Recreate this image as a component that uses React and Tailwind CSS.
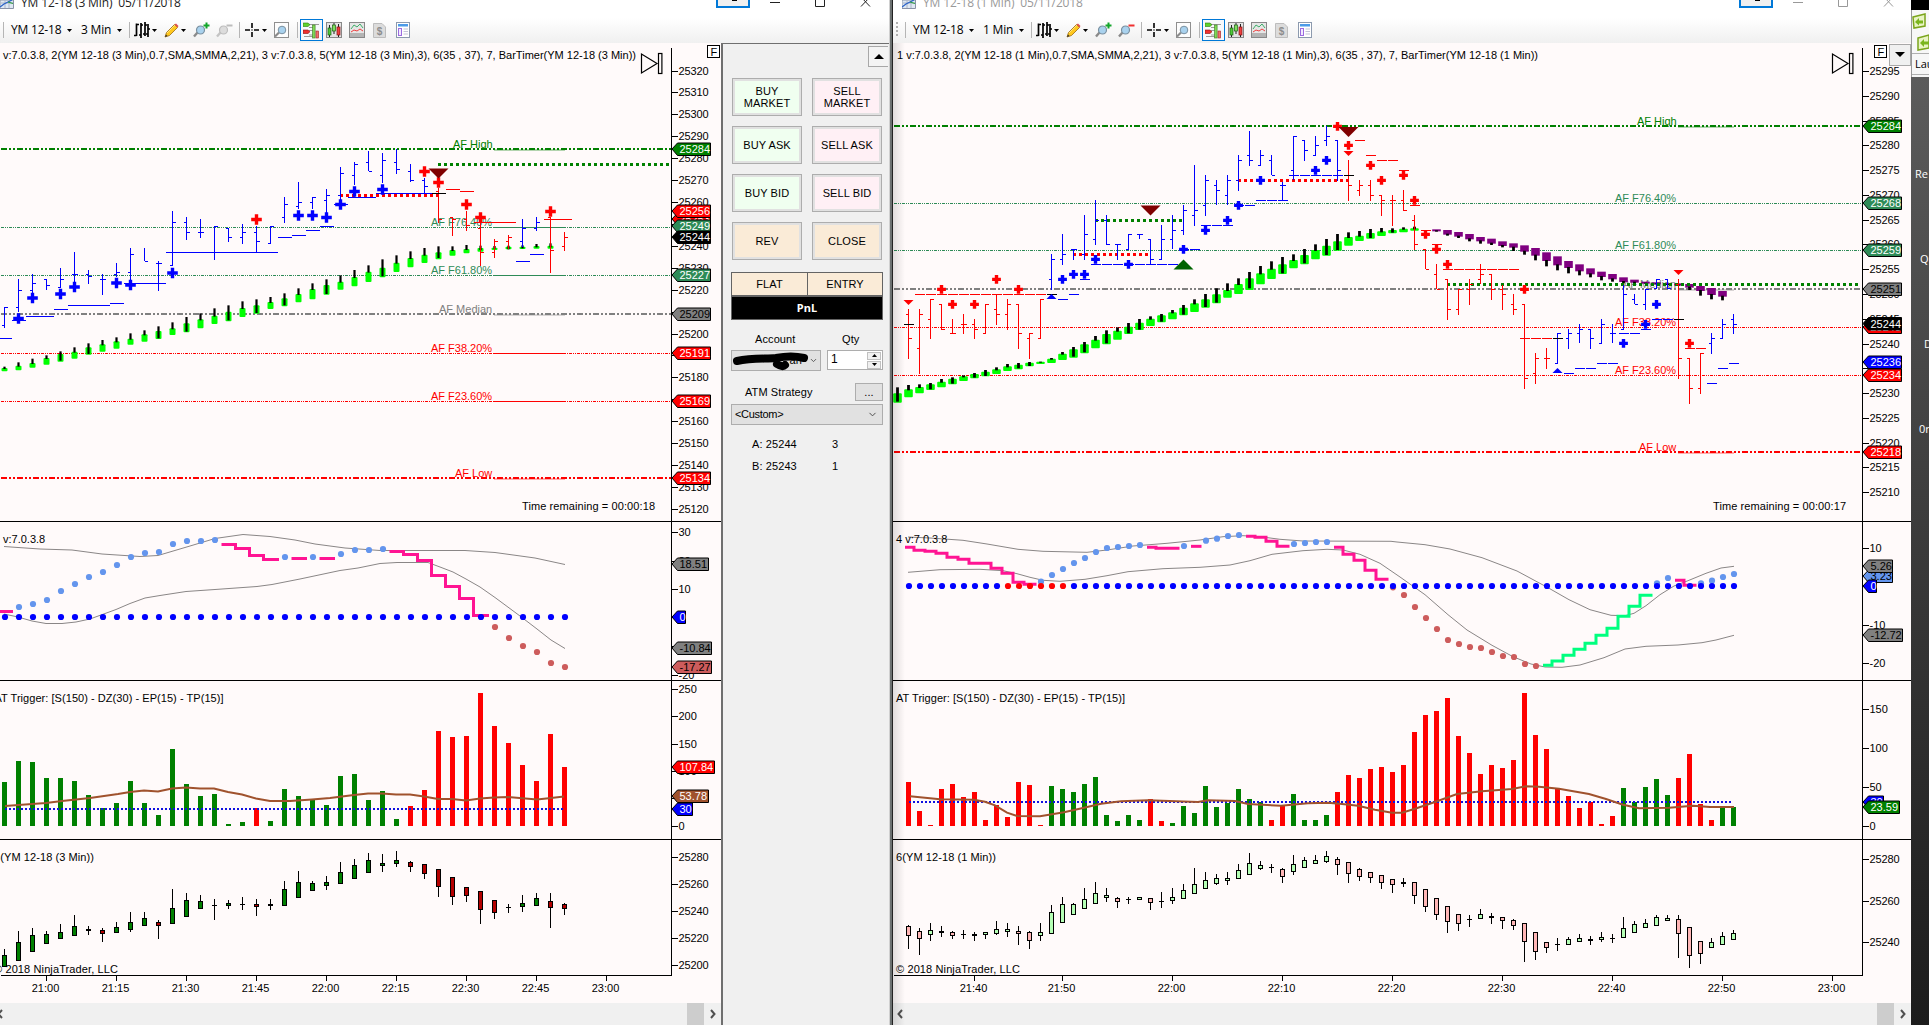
import { ChevronDown } from 'lucide-react';

const FONT = "font-['Liberation_Sans',Arial,sans-serif]";
const UI_FONT = "font-['Open_Sans','Noto_Sans',sans-serif]";

const BLUE = '#0000ff';
const RED = '#ff0000';
const GREEN = '#008000';
const SEA = '#2e8b57';
const GRAY = '#808080';
const PINK = '#ff1493';
const SKY = '#6495ed';
const ROSE = '#cd5c5c';
const BROWN = '#a0522d';

// rows are kept in thirds of a pixel below a base line, first entry is the bar index
const down = (base, rows) => rows.map((r) => r.map((v, k) => (k === 0 || typeof v === 'string' ? v : base + v / 3)));

/* ---------- 3 minute chart data ---------- */

const L = {
  x: (i) => 4.5 + 14 * i,
  step: 14,
  left: 0,
  width: 721,
  axis: 671.5,
  lastX: 565,
};

// index, high, low, open, close, colour
const lBars = [
  [0, 307, 328, 325, 307], [1, 279, 312, 307, 290], [2, 274, 293, 290, 283], [3, 279, 290, 279, 285],
  [4, 268, 288, 287, 279], [5, 252, 285, 274, 274], [6, 270, 284, 274, 276], [7, 274, 295, 279, 279],
  [8, 263, 277, 274, 272], [9, 248, 280, 272, 254], [10, 248, 261, null, 261], [11, 261, 291, 263, 263],
  [12, 211, 266, 265, 222], [13, 217, 240, 222, 232], [14, 219, 238, 232, 232], [15, 226, 260, null, 226],
  [16, 228, 242, 228, 237], [17, 224, 244, 237, 232], [18, 226, 252, 232, 241], [19, 226, 244, 243, 226],
  [20, 197, 223, 217, 204], [21, 182, 209, 206, 202], [22, 197, 209, 202, 197], [23, 189, 213, 200, 195],
  [24, 167, 200, 195, 173], [25, 162, 185, 175, 164], [26, 151, 171, 162, 171], [27, 153, 183, 175, 160],
  [28, 149, 174, 162, 169], [29, 164, 182, 171, 180], [30, 178, 193, 180, 186],
  [31, 188, 223, 191, 219, RED], [32, 217, 236, 217, 219, RED], [33, 211, 231, 219, 225, RED],
  [34, 222, 266, 228, 252, RED], [35, 239, 258, 252, 241, RED], [36, 235, 249, 241, 237, RED],
  [37, 219, 247, 241, 228], [38, 217, 231, 228, 222], [39, 217, 273, 217, 250, RED], [40, 232, 251, 246, 237, RED],
];

const lPluses = [
  [18, 318.5], [32, 298], [60, 294], [74, 287], [116, 283], [130, 285], [172, 273], [298, 215.5], [312, 215.5],
  [326, 217.5], [340, 204.5], [354, 191.5], [382, 189.5],
  [256, 219.5, RED], [424, 171.5, RED], [438, 182.5, RED], [466, 204.5, RED], [480, 217.5, RED], [550, 211.5, RED],
];

const lStops = [
  [0, 12, 338], [12, 26, 320], [26, 54, 316], [54, 68, 309], [68, 110, 305], [110, 124, 303], [124, 166, 283],
  [166, 278, 252], [278, 292, 237], [292, 306, 235], [306, 320, 230], [320, 334, 226], [334, 348, 204],
  [348, 376, 197], [376, 432, 193], [432, 446, 193, '#000'], [446, 460, 189, RED], [460, 474, 191, RED],
  [474, 516, 222, RED], [516, 530, 261], [530, 544, 254], [544, 572, 219, RED],
];

// index, wick top, body top, body bottom, wick bottom
const lTrend = [
  ...down(280, [
    [0, 260, 264, 274], [1, 247, 257, 271], [2, 236, 249, 263], [3, 226, 234, 254], [4, 214, 222, 245, 242],
    [5, 202, 215, 236], [6, 190, 202, 224, 222], [7, 180, 193, 215], [8, 172, 184, 206], [9, 160, 176, 194],
    [10, 151, 163, 185], [11, 139, 153, 177, 175], [12, 127, 145, 165], [13, 111, 130, 157, 155], [14, 100, 118, 145],
    [15, 85, 107, 132], [16, 76, 95, 124, 121], [17, 64, 84, 111], [18, 58, 76, 101, 99], [19, 51, 66, 87],
    [20, 40, 55, 79, 76], [21, 25, 42, 67], [22, 10, 27, 58],
  ]),
  ...down(0, [
    [23, 838, 855, 884, 882], [24, 826, 845, 869], [25, 810, 831, 859], [26, 796, 815, 846], [27, 778, 803, 832, 829],
    [28, 766, 788, 816], [29, 754, 774, 802], [30, 744, 764, 789], [31, 739, 757, 778, 774], [32, 739, 750, 767],
    [33, 735, 747, 760], [34, 737, 744, 755, 750], [35, 738, 743, 750], [36, 737, 740, 748, 748], [37, 736, 740, 747, 745],
    [38, 732, 738, 746, 742], [39, 730, 737, 746, 742],
  ]),
];

const lOsc = [
  [1, 607], [2, 604], [3, 600], [4, 591], [5, 584], [6, 577], [7, 572], [8, 565], [9, 557], [10, 553], [11, 552],
  [12, 544], [13, 541], [14, 541], [15, 540], [20, 557], [22, 557], [24, 554], [25, 550], [26, 550], [27, 549],
  [35, 627, ROSE], [36, 638, ROSE], [37, 646, ROSE], [38, 652, ROSE], [39, 663, ROSE], [40, 667, ROSE],
];

const lSteps = [
  [0, [611.5]],
  [16, [544.5, 548.5, 555.5, 559.5]],
  [21, [558.5]],
  [23, [558.5]],
  [28, [551.5, 554.5, 560.5, 575.5, 586.5, 598.5, 615.5]],
];

const lUpper = '4,546.5 18,547.5 40,549 72,550 102,554 140,556.5 158,555.5 190,546 215,538.5 243,534.5 270,536.5 295,540 315,544 345,548 380,550.5 465,550.5 495,552.5 535,558 565,564.5';
const lLower = '4,614 18,617 32,621 46,623.5 62,623.5 76,622 90,619 116,609.5 130,603.5 145,598 160,595.5 186,591.5 215,589.5 257,586.5 272,584.5 300,579 340,570.5 358,568 380,563.5 397,562.5 428,562.5 440,567 453,572 466,579 480,587 495,597.5 520,616 537,629 551,640 565,648.5';

const lVolume = [
  782, 761, 762, 778, 778, 781, 795, 808, 803, 781, 803, 815, 749, 784, 796, 794, 824, 822, 808, 821, 789, 796, 799,
  805, 776, 774, 800, 791, 819, 806, 790, 731, 737, 736, 693, 726, 743, 765, 781, 734, 767,
];
const lVolRed = (i) => i === 18 || i >= 29;
const lBrown = '5,806 32,804 46,803 62,801 90,798 104,796 118,794 130,792 144,790.5 158,791.5 172,788.5 186,787.5 200,788.5 214,788.5 228,792 242,794.5 256,798.5 270,801 290,801 312,799.5 330,798 354,795 368,793.5 382,793.5 396,794.5 410,794.5 424,796.5 438,799 452,799 466,800.5 480,798.5 494,797.5 508,797 537,799.5 551,798 564,796.5';

// index, high, body top, body bottom, low, kind
const lCandles = down(830, [
  [0, 357, 376, 412, 412, 'g'], [1, 303, 337, 394, 394, 'g'], [2, 294, 316, 367, 367, 'g'], [3, 303, 313, 341, 341, 'g'],
  [4, 282, 307, 328, 328, 'g'], [5, 255, 289, 317, 317, 'g'], [6, 289, 297, 304, 314, 'g'], [7, 294, 301, 311, 335, 'r'],
  [8, 276, 292, 308, 308, 'g'], [9, 246, 277, 299, 305, 'g'], [10, 246, 265, 287, 287, 'g'], [11, 270, 277, 287, 326, 'r'],
  [12, 177, 235, 283, 283, 'g'], [13, 189, 211, 260, 260, 'g'], [14, 195, 214, 236, 236, 'g'], [15, 207, 225, 228, 269, 'k'],
  [16, 210, 220, 227, 237, 'g'], [17, 201, 222, 225, 240, 'k'], [18, 207, 223, 230, 258, 'r'], [19, 207, 222, 227, 240, 'k'],
  [20, 153, 178, 227, 227, 'g'], [21, 123, 157, 203, 203, 'g'], [22, 153, 160, 182, 182, 'g'], [23, 138, 157, 169, 180, 'g'],
  [24, 96, 127, 163, 163, 'g'], [25, 87, 106, 146, 146, 'g'], [26, 69, 91, 128, 128, 'g'], [27, 72, 100, 109, 126, 'g'],
  [28, 63, 91, 103, 110, 'g'], [29, 93, 97, 112, 125, 'r'], [30, 102, 103, 131, 147, 'r'], [31, 118, 118, 170, 201, 'r'],
  [32, 142, 142, 200, 224, 'r'], [33, 172, 172, 197, 216, 'r'], [34, 183, 184, 239, 282, 'r'], [35, 210, 211, 248, 267, 'r'],
  [36, 222, 230, 233, 249, 'k'], [37, 195, 220, 232, 246, 'g'], [38, 189, 205, 228, 228, 'g'], [39, 189, 214, 233, 293, 'r'],
  [40, 219, 223, 236, 255, 'r'],
]);

/* ---------- 1 minute chart data ---------- */

const R = {
  x: (i) => 908.5 + 11 * i,
  step: 11,
  left: 893,
  width: 1018,
  axis: 1862.5,
  lastX: 1734,
};

const rBars = down(0, [
  [0, 927, 1077, 943, 1016, RED], [1, 927, 1122, 1045, 943, RED], [2, 898, 1017, 958, 898, RED], [3, 912, 990, 912, 988, RED],
  [4, 957, 1000, 1000, 1000, RED], [5, 942, 1001, 973, 973, RED], [6, 957, 1017, 973, 988, RED], [7, 912, 1000, 1000, 912, RED],
  [8, 884, 974, 928, 943, RED], [9, 898, 990, 943, 913, RED], [10, 912, 1047, 912, 1000, RED], [11, 1000, 1077, 1016, 1000, RED],
  [12, 898, 1016, 1016, 898, RED], [13, 763, 869, 838, 778], [14, 702, 795, 778, 763], [15, 748, 780, 748, 748],
  [16, 645, 779, 763, 703], [17, 600, 734, 717, 661], [18, 645, 734, 661, 733], [19, 733, 780, 733, 733],
  [20, 703, 748, 748, 703], [21, 703, 718, 703, 703], [22, 718, 793, 718, 778], [23, 675, 778, 778, 718],
  [24, 645, 748, 718, 691], [25, 615, 704, 691, 631], [26, 495, 678, 646, 631], [27, 525, 648, 617, 541],
  [28, 540, 616, 556, 571], [29, 525, 616, 586, 541], [30, 465, 573, 541, 481], [31, 393, 497, 466, 481],
  [32, 450, 497, 496, 466], [33, 465, 526, 481, 526], [34, 545, 601, 556, 556], [35, 408, 540, 511, 408],
  [36, 420, 482, 420, 451], [37, 408, 467, 466, 436], [38, 379, 437, 421, 408], [39, 420, 542, 420, 511],
  [40, 480, 602, 541, 556, RED], [41, 540, 587, 571, 556, RED], [42, 540, 602, 556, 586, RED], [43, 585, 648, 586, 601, RED],
  [44, 585, 678, 601, 601, RED], [45, 570, 632, 601, 631, RED], [46, 645, 750, 660, 734, RED], [47, 748, 808, 748, 808, RED],
  [48, 792, 868, 823, 868, RED], [49, 838, 960, 838, 928, RED], [50, 868, 945, 928, 868, RED], [51, 838, 915, 868, 853, RED],
  [52, 792, 853, 838, 823, RED], [53, 822, 900, 823, 868, RED], [54, 855, 930, 868, 883, RED], [55, 882, 945, 913, 928, RED],
  [56, 912, 1167, 913, 1135, RED], [57, 1058, 1152, 1120, 1075, RED], [58, 1044, 1107, 1075, 1075, RED],
  [59, 1000, 1091, 1091, 1000], [60, 987, 1047, 1016, 1000], [61, 972, 1030, 1000, 987], [62, 988, 1047, 988, 1016],
  [63, 957, 1030, 1030, 972], [64, 972, 1030, 1000, 1000], [65, 855, 988, 988, 883], [66, 883, 913, 898, 913],
  [67, 868, 930, 913, 868], [68, 838, 868, 866, 838], [69, 838, 868, 838, 866], [70, 838, 1137, 853, 1075, RED],
  [71, 1075, 1212, 1075, 1165, RED], [72, 1060, 1182, 1165, 1060, RED], [73, 1000, 1062, 1030, 1016],
  [74, 957, 1016, 1016, 972], [75, 942, 1002, 957, 972],
]);

const rPluses = down(0, [
  [3, 868, RED], [4, 913, RED], [6, 913, RED], [8, 838, RED], [10, 868, RED], [39, 379, RED], [40, 436, RED],
  [42, 496, RED], [43, 541, RED], [45, 526, RED], [46, 601, RED], [47, 703, RED], [48, 748, RED], [49, 793, RED],
  [56, 868, RED], [71, 1030, RED],
  [14, 838], [15, 823], [16, 823], [17, 778], [20, 793], [25, 748], [27, 691], [29, 661], [30, 616], [32, 541],
  [37, 511], [38, 481], [65, 1030], [67, 973], [68, 913],
]).map(([i, y, c]) => [908.5 + 11 * i, y, c]);

// first bar, last bar, level, colour
const rStops = [
  [0, 0, 973, '#000'], [1, 12, 883, RED], [13, 13, 883, '#000'], [14, 14, 898], [15, 15, 883], [16, 16, 838],
  [17, 24, 793], [25, 26, 748], [27, 29, 676], [30, 31, 616], [32, 34, 601], [35, 39, 526], [40, 40, 526, '#000'],
  [41, 41, 421, RED], [42, 42, 466, RED], [43, 44, 481, RED], [45, 45, 511, RED], [46, 46, 616, RED],
  [47, 47, 691, RED], [48, 48, 733, RED], [49, 55, 808, RED], [56, 58, 1016, RED], [59, 59, 1016, '#000'],
  [60, 60, 1120], [61, 62, 1105], [63, 64, 1090], [65, 66, 1000], [67, 67, 988], [68, 69, 958],
  [70, 70, 958, '#000'], [71, 72, 1045, RED], [73, 73, 1150], [74, 74, 1105], [75, 75, 1090],
].flatMap(([a, b, y, c]) =>
  Array.from({ length: b - a + 1 }, (_, k) => [904 + 11 * (a + k), 914 + 11 * (a + k), Math.floor(y / 3), c]));

const rTrend = [
  ...down(290, [
    [-1, 292, 310, 338, 335], [0, 285, 298, 322], [1, 283, 291, 310], [2, 279, 283, 300, 298], [3, 267, 275, 292],
    [4, 262, 266, 283, 281], [5, 256, 259, 273], [6, 249, 252, 265, 263], [7, 240, 245, 259, 258], [8, 232, 238, 252],
    [9, 222, 229, 243], [10, 219, 224, 238, 235], [11, 216, 218, 229, 228], [12, 215, 215, 222], [13, 204, 206, 219],
    [14, 186, 191, 210], [15, 171, 178, 203, 200], [16, 156, 163, 190, 187], [17, 138, 149, 175], [18, 121, 132, 163, 160],
    [19, 112, 122, 149], [20, 99, 110, 132, 130], [21, 87, 98, 120, 119], [22, 79, 86, 108], [23, 72, 76, 97, 95],
    [24, 60, 67, 88], [25, 45, 53, 76, 74], [26, 28, 40, 66], [27, 12, 28, 53, 51],
  ]),
  ...down(0, [
    [28, 865, 883, 910, 908], [29, 850, 870, 893], [30, 835, 852, 882], [31, 816, 835, 870, 865], [32, 798, 820, 853],
    [33, 784, 806, 837], [34, 771, 793, 822, 820], [35, 763, 780, 805], [36, 747, 765, 793, 790], [37, 733, 750, 778],
    [38, 717, 737, 767, 765], [39, 702, 724, 752, 750], [40, 697, 711, 737], [41, 693, 707, 723], [42, 687, 699, 716, 714],
    [43, 684, 694, 708], [44, 685, 690, 700, 698], [45, 682, 686, 697], [46, 680, 685, 692],
  ]),
];

// index, body top, body bottom, wick bottom
const rFall = down(0, [
  [48, 688, 694, 695], [49, 690, 704, 707], [50, 696, 710, 714], [51, 702, 718, 724], [52, 711, 724, 731], [53, 716, 731, 735],
  [54, 724, 738, 742], [55, 730, 743, 753], [56, 736, 755, 764], [57, 744, 767, 781], [58, 757, 783, 799], [59, 769, 796, 811],
  [60, 783, 804, 820], [61, 793, 814, 826], [62, 805, 823, 832], [63, 815, 831, 841], [64, 822, 838, 845], [65, 832, 846, 850],
  [66, 839, 848, 850], [67, 845, 851, 851], [68, 847, 853, 853], [69, 849, 855, 855], [70, 850, 857, 857], [71, 852, 863, 870],
  [72, 858, 873, 887], [73, 864, 885, 898], [74, 873, 890, 901],
]);

const rOsc = down(290, [
  [12, 875], [13, 855], [14, 837], [15, 819], [16, 804], [17, 786], [18, 774], [19, 771], [20, 768], [21, 765], [25, 768],
  [27, 752], [28, 746], [29, 738], [30, 735], [35, 762], [36, 759], [37, 756], [38, 756], [68, 880], [69, 864], [72, 880],
  [73, 872], [74, 861], [75, 852],
  [44, 892, ROSE], [45, 915, ROSE], [46, 951, ROSE], [47, 984, ROSE], [48, 1017, ROSE], [49, 1050, ROSE], [50, 1062, ROSE],
  [51, 1071, ROSE], [52, 1074, ROSE], [53, 1086, ROSE], [54, 1098, ROSE], [55, 1101, ROSE], [56, 1122, ROSE], [57, 1128, ROSE],
]);

const rSteps = [
  [0, [772, 781, 784, 790, 802, 808, 820, 820, 835, 850, 877, 883]],
  [22, [772, 775, 775]],
  [26, [769]],
  [31, [739, 742, 754, 769]],
  [39, [772, 793, 811, 841, 868]],
  [70, [871, 886]],
  [58, [1126, 1113, 1096, 1078, 1060, 1036, 1015, 979, 949, 916], '#00ff7f'],
].map(([i, ys, c]) => [i, ys.map((y) => 290 + y / 3), c]);

const rUpper = '908,537 930,538 963,540.3 987,544 1018,549.3 1043,551.3 1087,552.3 1107,550 1133,546 1167,543.3 1200,540 1223,536.7 1243,535.7 1260,536.7 1280,539.3 1303,541 1391,541.3 1397,542 1425,544.7 1450,549 1482,557.7 1517,571 1548,587.7 1569,599.7 1590,609.7 1611,615.3 1625,615.7 1634,613.3 1646,605.7 1660,594.7 1674,586 1688,580.7 1706,573.3 1721,568 1734,566.3';
const rLower = '908,572.3 940,569.7 980,569.3 1003,570.7 1017,573.7 1030,577.3 1043,580.3 1060,581.3 1085,579.3 1107,575.7 1128,571.7 1163,568.7 1200,567.3 1230,565 1250,560.7 1272,554.3 1303,550.7 1327,549.3 1343,550 1360,554.3 1380,563.3 1401,577.7 1425,594.7 1448,614.7 1467,630 1492,645.3 1513,656.7 1531,664 1545,667 1562,667.3 1580,665 1604,657.7 1625,649 1646,646.3 1678,645 1702,642.7 1716,640 1734,635.3';

const rVolume = [
  366, 453, 495, 387, 372, 411, 396, 480, 436, 471, 366, 375, 495, 378, 387, 396, 372, 351, 465, 483, 465, 480, 417, 483,
  489, 438, 459, 378, 441, 429, 387, 417, 426, 480, 435, 402, 480, 480, 465, 396, 345, 354, 327, 321, 336, 315, 216, 165,
  153, 114, 228, 279, 342, 315, 324, 300, 99, 225, 267, 387, 408, 444, 426, 492, 468, 384, 427, 381, 357, 405, 354, 282,
  432, 480, 441, 442,
].map((v) => 660 + v / 3);
const rVolRed = (i) =>
  i <= 12 || i === 22 || i === 23 || i === 33 || i === 34 || (i >= 39 && i <= 64) || (i >= 70 && i <= 73);
const rBrown = '910,796.3 940,799.3 974,799.7 985,801.7 995,805.3 1007,812.7 1017,816 1040,816.3 1064,812.3 1084,807.7 1101,803.7 1121,801.3 1148,800.3 1198,802 1208,800.3 1235,801 1248,804 1281,805.7 1308,803.3 1328,802.7 1342,804 1358,805.7 1375,809.7 1392,812.7 1402,812.7 1415,808.7 1435,802 1457,794 1482,791.3 1512,789 1526,786.3 1539,786.7 1559,788.7 1589,794 1606,799 1623,804.7 1639,808.3 1669,807.7 1693,805.7 1710,807 1734,807';

const rCandles = down(660, [
  [0, 796, 797, 829, 867, 'r'], [1, 804, 814, 838, 885, 'r'], [2, 789, 811, 826, 843, 'g'], [3, 798, 813, 818, 831, 'k'],
  [4, 813, 815, 829, 837, 'r'], [5, 810, 822, 825, 836, 'k'], [6, 816, 823, 827, 843, 'k'], [7, 816, 817, 826, 836, 'g'],
  [8, 783, 806, 821, 825, 'g'], [9, 789, 808, 815, 830, 'g'], [10, 798, 812, 821, 855, 'r'], [11, 813, 815, 844, 866, 'r'],
  [12, 789, 817, 829, 843, 'g'], [13, 735, 757, 823, 823, 'g'], [14, 711, 733, 790, 790, 'g'], [15, 729, 733, 764, 764, 'g'],
  [16, 684, 718, 748, 748, 'g'], [17, 666, 700, 733, 733, 'g'], [18, 684, 706, 715, 726, 'g'], [19, 711, 713, 727, 743, 'r'],
  [20, 711, 717, 721, 731, 'k'], [21, 711, 712, 719, 720, 'g'], [22, 714, 715, 730, 750, 'r'], [23, 696, 723, 726, 745, 'k'],
  [24, 684, 710, 724, 732, 'g'], [25, 672, 691, 718, 718, 'g'], [26, 624, 673, 703, 703, 'g'], [27, 636, 661, 688, 688, 'g'],
  [28, 642, 655, 673, 676, 'g'], [29, 636, 653, 664, 675, 'g'], [30, 612, 631, 658, 658, 'g'], [31, 579, 610, 646, 646, 'g'],
  [32, 603, 616, 628, 630, 'g'], [33, 612, 621, 625, 640, 'k'], [34, 624, 626, 652, 669, 'r'], [35, 585, 613, 637, 645, 'g'],
  [36, 591, 601, 625, 625, 'g'], [37, 585, 601, 613, 613, 'g'], [38, 573, 589, 607, 610, 'g'], [39, 591, 598, 616, 645, 'r'],
  [40, 606, 607, 643, 669, 'r'], [41, 624, 626, 652, 662, 'r'], [42, 636, 637, 655, 669, 'r'], [43, 645, 646, 670, 686, 'r'],
  [44, 657, 658, 674, 698, 'r'], [45, 654, 667, 671, 681, 'k'], [46, 666, 667, 709, 731, 'r'], [47, 687, 688, 742, 755, 'r'],
  [48, 714, 715, 766, 780, 'r'], [49, 738, 739, 787, 819, 'r'], [50, 762, 763, 793, 812, 'r'], [51, 765, 777, 780, 800, 'k'],
  [52, 747, 763, 778, 778, 'g'], [53, 759, 769, 775, 791, 'k'], [54, 771, 772, 784, 806, 'r'], [55, 777, 779, 799, 811, 'r'],
  [56, 789, 790, 847, 906, 'r'], [57, 816, 817, 877, 900, 'r'], [58, 846, 847, 865, 878, 'r'], [59, 834, 852, 856, 873, 'k'],
  [60, 831, 838, 856, 856, 'g'], [61, 822, 833, 847, 847, 'g'], [62, 828, 838, 842, 854, 'k'], [63, 816, 832, 839, 847, 'g'],
  [64, 822, 834, 837, 848, 'k'], [65, 771, 805, 835, 835, 'g'], [66, 783, 793, 820, 820, 'g'], [67, 777, 790, 805, 805, 'g'],
  [68, 765, 772, 799, 799, 'g'], [69, 765, 775, 784, 784, 'g'], [70, 765, 778, 823, 893, 'r'], [71, 801, 802, 889, 924, 'r'],
  [72, 843, 844, 883, 911, 'r'], [73, 834, 847, 865, 865, 'g'], [74, 816, 829, 856, 856, 'g'], [75, 810, 820, 841, 841, 'g'],
]);

/* ---------- drawing primitives ---------- */

function Pane({ c, top, bottom, children }) {
  const first = top === 43;
  return (
    <svg
      className={`block shrink-0 ${FONT} text-[11px]`}
      width={c.width}
      height={bottom - top}
      viewBox={`${c.left} ${top} ${c.width} ${bottom - top}`}
    >
      <rect x={c.left} y={top} width={c.width} height={bottom - top} fill="#fffafa" />
      {children}
      <g shapeRendering="crispEdges" stroke="#000">
        {!first && <path d={`M${c.left} ${top + 0.5}H${c.left + c.width}`} />}
        <path d={`M${c.axis} ${first ? 48 : top}V${Math.min(bottom, 975)}`} />
      </g>
    </svg>
  );
}

function Label({ x, y, w, fill = '#000', anchor, children }) {
  return (
    <text x={x} y={y} fill={fill} textAnchor={anchor} textLength={w} xmlSpace="preserve">
      {children}
    </text>
  );
}

function Scale({ c, ticks }) {
  return ticks.map(([label, y]) => (
    <g key={label}>
      <path d={`M${c.axis} ${Math.floor(y) + 0.5}h6`} stroke="#000" shapeRendering="crispEdges" />
      <Label x={c.axis + 7} y={Math.floor(y) + 4} w={label.length === 5 ? 30 : undefined}>{label}</Label>
    </g>
  ));
}

function Tag({ c, y, w = 39, fill, dark, children }) {
  const x = c.axis;
  return (
    <g>
      <path d={`M${x + 0.5} ${y}L${x + 6} ${y - 6}H${x + w}V${y + 6.5}H${x + 6}Z`} fill={fill} stroke="#000" />
      <Label x={x + 8} y={y + 4} fill={dark ? '#000' : '#fff'}>{children}</Label>
    </g>
  );
}

function Level({ c, y, color, thick, label, lx, lend, soft }) {
  const end = c.axis - 1;
  return (
    <g>
      <path
        d={`M${c.left + 1} ${thick ? y : y + 0.5}H${end}`}
        stroke={color}
        strokeWidth={thick ? 2 : 1}
        strokeDasharray={thick ? '6 2 2 2 2 2' : '3 1 1 1 1 1'}
        shapeRendering="crispEdges"
      />
      {!soft && <path d={`M${lend} ${thick ? y + 1 : y + 0.5}H${c.lastX}`} stroke={color} strokeOpacity={thick ? 0.6 : 1} />}
      <Label x={lx} y={y - 1} fill={color}>{label}</Label>
    </g>
  );
}

function Bars({ c, rows, tick = 3 }) {
  return (
    <g shapeRendering="crispEdges">
      {rows.map(([i, hi, lo, open, close, color]) => (
        <path
          key={i}
          stroke={color || BLUE}
          fill="none"
          d={`M${c.x(i)} ${hi}V${lo}${open ? `M${c.x(i)} ${Math.floor(open) + 0.5}h-${tick}` : ''}M${c.x(i)} ${Math.floor(close) + 0.5}h${tick}`}
        />
      ))}
    </g>
  );
}

function Pluses({ rows, s }) {
  return rows.map(([x, y, color]) => (
    <path key={`${x}-${y}`} d={`M${x - s} ${y}H${x + s}M${x} ${y - s}V${y + s}`} stroke={color || BLUE} strokeWidth="3.4" />
  ));
}

function Stops({ rows }) {
  return rows.map(([a, b, y, color], k) => (
    <path key={k} d={`M${a} ${y + 0.5}H${b}`} stroke={color || BLUE} shapeRendering="crispEdges" />
  ));
}

function Trend({ c, rows, w }) {
  return rows.map(([i, wt, bt, bb, wb]) => (
    <g key={i}>
      <rect x={c.x(i) - w / 2} y={bt} width={w} height={bb - bt} rx="1" fill="#00ff00" />
      <path d={`M${c.x(i)} ${wt}V${wb || bt + 1}`} stroke="#000" strokeWidth={w > 7 ? 2.8 : 2.2} />
    </g>
  ));
}

function Dotted({ x1, x2, y, color }) {
  return <path d={`M${x1} ${y}H${x2}`} stroke={color} strokeWidth="3" strokeDasharray="3 3" shapeRendering="crispEdges" />;
}

function Marker({ x, y, s, h, color }) {
  return <path d={`M${x - s} ${y}H${x + s}L${x} ${y + h}Z`} fill={color} />;
}

function Oscillator({ c, count, dots, steps, zero, upper, lower, isRed }) {
  return (
    <g>
      <polyline points={upper} fill="none" stroke="#8a8686" />
      <polyline points={lower} fill="none" stroke="#8a8686" />
      {steps.map(([i, ys, color]) => {
        const half = c.step / 2;
        const d = ys.map((y, k) => `${k ? 'V' : `M${c.x(i) - half + (c.step === 11 ? 2 : 0)} `}${y}H${c.x(i + k) + half}`).join('');
        return <path key={i} d={`${d}h1.5`} fill="none" stroke={color || PINK} strokeWidth="3" />;
      })}
      {dots.map(([i, y, color]) => (
        <circle key={i} cx={c.x(i) + 0.5} cy={y} r="3.1" fill={color || SKY} />
      ))}
      {Array.from({ length: count }, (_, i) => (
        <circle key={i} cx={c.x(i) + 0.5} cy={zero} r="3.1" fill={isRed && isRed(i) ? RED : BLUE} />
      ))}
    </g>
  );
}

function Volume({ c, tops, isRed, line, dotY }) {
  return (
    <g>
      <g shapeRendering="crispEdges">
        {tops.map((y, i) => (
          <rect key={i} x={c.x(i) - 2.5} y={Math.round(y)} width="5" height={826 - Math.round(y)} fill={isRed(i) ? RED : GREEN} />
        ))}
      </g>
      <path d={`M${c.x(0)} ${dotY}H${c.lastX - 1}`} stroke="#1010e0" strokeWidth="2" strokeDasharray="2 2" shapeRendering="crispEdges" />
      <polyline points={line} fill="none" stroke={BROWN} strokeWidth="2" />
    </g>
  );
}

function Candles({ c, rows, up, dn }) {
  return (
    <g shapeRendering="crispEdges">
      {rows.map(([i, hi, top, bottom, lo, kind]) => {
        const t = Math.round(top);
        const h = Math.max(1, Math.round(bottom) - t);
        const fill = kind === 'k' ? '#000' : kind === 'g' ? up : dn;
        return (
          <g key={i}>
            <path d={`M${c.x(i)} ${hi}V${lo}`} stroke="#000" />
            <rect x={c.x(i) - 2.5} y={t} width="5" height={h} fill="#000" />
            {h > 2 && <rect x={c.x(i) - 1.5} y={t + 1} width="3" height={h - 2} fill={fill} />}
          </g>
        );
      })}
    </g>
  );
}

function PlayToEnd({ x }) {
  return (
    <g fill="#fffafa" stroke="#000" strokeWidth="1.2">
      <path d={`M${x} 54V73L${x + 15.5} 63.5Z`} />
      <rect x={x + 17} y="53.5" width="3.4" height="20" />
    </g>
  );
}

function FixedBox({ x }) {
  return (
    <g>
      <rect x={x} y="45.5" width="12" height="12" fill="#fff" stroke="#000" />
      <Label x={x + 3} y="55.5">F</Label>
    </g>
  );
}

function TimeAxis({ c, times }) {
  return (
    <g>
      <path d={`M${c.left + 1} 975.5H${c.axis}`} stroke="#000" shapeRendering="crispEdges" />
      {times.map(([t, x]) => (
        <g key={t}>
          <path d={`M${x + 0.5} 975V981`} stroke="#000" shapeRendering="crispEdges" />
          <Label x={x - 0.5} y="992" anchor="middle">{t}</Label>
        </g>
      ))}
    </g>
  );
}

/* ---------- toolbar ---------- */

const Sep = ({ className }) => <div className={`h-4 w-px bg-[#b5b5b5] ${className}`} />;

const Caret = ({ className }) => (
  <svg className={className} width="5" height="3" viewBox="0 0 5 3"><path d="M0 0H5L2.5 3Z" fill="#000" /></svg>
);

function BarsIcon() {
  return (
    <svg width="16" height="16" viewBox="0 0 16 16" fill="none" stroke="#000" strokeWidth="1.7">
      <path d="M0 13.5H2.5M2.5 1.5V14M2.5 2.5H5M7 1V16M5 13H7M7 3H9M11 0V14M9 12H11M11 3H13M14 2V15M12 12H14M14 7H16" />
    </svg>
  );
}

function PencilIcon() {
  return (
    <svg width="15" height="15" viewBox="0 0 15 15">
      <path d="M1 14L2.5 9.5L10.5 1.5L13.5 4.5L5.5 12.5Z" fill="#ffc81e" stroke="#9a6a10" strokeWidth=".8" />
      <path d="M3 10L11 2" stroke="#ffe680" />
      <path d="M10.5 1.5L12 .5L14.5 3L13.5 4.5Z" fill="#e05050" />
      <path d="M1 14L2 11.5L3.5 13Z" fill="#333" />
    </svg>
  );
}

function ZoomIcon({ sign, off }) {
  const lens = off ? '#dcdcdc' : '#a9d2ee';
  const rim = off ? '#bdbdbd' : '#7a90a0';
  return (
    <svg width="17" height="16" viewBox="0 0 17 16">
      <path d="M1 14.5L4.5 10.5" stroke={off ? '#c4c4c4' : '#8a8a8a'} strokeWidth="2.4" />
      <circle cx="7.5" cy="8" r="4" fill={lens} stroke={rim} strokeWidth="1.2" />
      <path d={sign === '+' ? 'M10.5 3.5H16.5M13.5 .5V6.5' : 'M10.5 3.5H16.5'} stroke={sign === '+' ? '#12a52a' : off ? '#bcbcbc' : '#f03030'} strokeWidth="2" />
    </svg>
  );
}

function CrossIcon() {
  return (
    <svg width="14" height="14" viewBox="0 0 14 14" stroke="#000" strokeWidth="1.6">
      <path d="M7 0V5M7 9V14M0 7H5M9 7H14M6.5 7H7.5" />
    </svg>
  );
}

function InspectIcon() {
  return (
    <svg width="15" height="16" viewBox="0 0 15 16">
      <rect x=".5" y=".5" width="14" height="15" fill="#fdfdfd" stroke="#8f8f8f" />
      <path d="M1 14.5L5 10.5" stroke="#8a8a8a" strokeWidth="2.2" />
      <circle cx="8" cy="8" r="3.8" fill="#a9d2ee" stroke="#7a90a0" />
    </svg>
  );
}

function TraderIcon() {
  return (
    <svg width="17" height="17" viewBox="0 0 17 17">
      <path d="M6 2.5H16M6 5.5H11M6 8.500H11M6 13H11M1 14.500H10" stroke="#9a9a9a" />
      <path d="M0 1H5L7 2.700L5 4.500H0Z" fill="#5fd22a" stroke="#2c7a10" strokeWidth=".6" />
      <path d="M0 8H5L7 9.700L5 11.500H0Z" fill="#ee3030" stroke="#8a1010" strokeWidth=".6" />
      <rect x="9.500" y="3" width="2.600" height="13" fill="#7ed957" stroke="#3a7a20" strokeWidth=".6" />
      <rect x="13" y="9" width="2.600" height="7" fill="#f07070" stroke="#a02020" strokeWidth=".6" />
    </svg>
  );
}

function CandleIcon() {
  return (
    <svg width="16" height="16" viewBox="0 0 16 16">
      <rect x=".5" y=".5" width="15" height="15" fill="#e4e4e4" stroke="#888" />
      <path d="M3.5 3V15M8 1V12M12.500 2V15" stroke="#222" />
      <rect x="2" y="6" width="3" height="7" fill="#4fc93a" stroke="#1d5f10" strokeWidth=".7" />
      <rect x="6.500" y="3" width="3" height="6" fill="#7ee060" stroke="#1d5f10" strokeWidth=".7" />
      <rect x="11" y="5" width="3" height="8" fill="#ee4040" stroke="#801010" strokeWidth=".7" />
    </svg>
  );
}

function LinesIcon() {
  return (
    <svg width="16" height="16" viewBox="0 0 16 16">
      <rect x=".5" y=".5" width="15" height="15" fill="#e6e6e6" stroke="#888" />
      <rect x="1" y="11" width="14" height="4" fill="#b4b4b4" />
      <path d="M2 7L5 3L8 5L11 2L14 6" fill="none" stroke="#3faf6a" />
      <path d="M2 10L5 8L8 9L11 7L14 9" fill="none" stroke="#ee4040" />
    </svg>
  );
}

function DollarIcon() {
  return (
    <svg width="13" height="15" viewBox="0 0 13 15">
      <path d="M.5 .5H9L12.500 4V14.500H.5Z" fill="#dcdcdc" stroke="#bdbdbd" />
      <text x="6.500" y="11.500" textAnchor="middle" fill="#8d8d8d" className="font-['Liberation_Sans'] text-[10px] font-bold">$</text>
    </svg>
  );
}

function FormIcon() {
  return (
    <svg width="14" height="16" viewBox="0 0 14 16">
      <rect x=".5" y=".5" width="13" height="15" fill="#fff" stroke="#8c9aae" />
      <rect x="2" y="2" width="10" height="2.500" fill="#4c9be8" />
      <rect x="2.500" y="6.500" width="3" height="7" fill="#f3eaff" stroke="#9b6be0" />
      <path d="M7.500 7H12M7.500 9.500H12M7.500 12H12" stroke="#c3c3d6" />
    </svg>
  );
}

function ToolBar({ period, zoomOutOff }) {
  return (
    <div className={`flex h-6 items-center text-[12px] leading-none tracking-[-0.2px] text-black ${UI_FONT}`}>
      <Sep className="ml-[3px]" />
      <span className="ml-[7px] w-[54px] whitespace-nowrap">YM 12-18</span>
      <Caret className="ml-[2px]" />
      <span className="ml-[9px] w-[36px] whitespace-nowrap">{period}</span>
      <Caret className="ml-[0px]" />
      <Sep className="ml-[7px]" />
      <div className="ml-[4px]"><BarsIcon /></div>
      <Caret className="ml-[2px]" />
      <div className="ml-[7px]"><PencilIcon /></div>
      <Caret className="ml-[2px]" />
      <div className="ml-[7px]"><ZoomIcon sign="+" /></div>
      <div className="ml-[6px]"><ZoomIcon sign="-" off={zoomOutOff} /></div>
      <Sep className="ml-[6px]" />
      <div className="ml-[5px]"><CrossIcon /></div>
      <Caret className="ml-[3px]" />
      <div className="ml-[7px]"><InspectIcon /></div>
      <Sep className="ml-[8px]" />
      <div className="ml-[2px] flex h-[22px] w-[23px] items-center justify-center border border-[#0078d7] bg-[#f6f9fc]"><TraderIcon /></div>
      <div className="ml-[3px]"><CandleIcon /></div>
      <div className="ml-[7px]"><LinesIcon /></div>
      <div className="ml-[8px]"><DollarIcon /></div>
      <div className="ml-[10px]"><FormIcon /></div>
    </div>
  );
}

function TitleBar({ title, pad, color, right }) {
  return (
    <div className={`flex h-[18px] shrink-0 justify-between overflow-hidden bg-white ${pad}`}>
      <div className="flex items-start">
        <svg width="14" height="9" viewBox="0 0 14 9">
          <path d="M0 0H13.500V8.500H0Z" fill="#dfe8f3" stroke="#8a93a8" />
          <path d="M1 3H13M5 0V8M9 0V8" stroke="#a9b4c8" />
          <path d="M0 7L4 4L8 2L12 0" fill="none" stroke="#2a62c8" strokeWidth="1.300" />
          <path d="M8 2L13 3.500" stroke="#2fa040" strokeWidth="1.300" />
        </svg>
        <span className={`-mt-[5px] ml-[7px] text-[12px] leading-4 tracking-[-0.12px] whitespace-pre ${UI_FONT} ${color}`}>{title}</span>
      </div>
      <svg className={`shrink-0 ${right}`} width="157" height="10" viewBox="0 0 157 10">
        <path d="M1 -2V7H33V-2" fill="#f0f0f0" stroke="#0078d7" strokeWidth="2" />
        <path d="M16 .5H21" stroke="#000" />
        <g className={color} stroke="currentColor" fill="none">
          <path d="M54 2.500H64M99.500 -2V6.500H108.500V-2M145 6.500L154 -3M145 -3L154 6.500" />
        </g>
      </svg>
    </div>
  );
}

function ScrollBar({ thumb, rightGap }) {
  return (
    <div className="flex h-[22px] shrink-0 items-center justify-between bg-[#f0f0f0] text-[#505050]">
      <svg width="14" height="10" viewBox="0 0 14 10"><path d={`M${thumb} 1L${thumb - 3.5} 5L${thumb} 9`} fill="none" stroke="currentColor" strokeWidth="2" /></svg>
      <div className={`flex h-full items-center ${rightGap}`}>
        <div className="h-full w-[17px] bg-[#cdcdcd]" />
        <svg className="ml-[6px]" width="6" height="10" viewBox="0 0 6 10"><path d="M1 1L4.500 5L1 9" fill="none" stroke="currentColor" strokeWidth="2" /></svg>
      </div>
    </div>
  );
}

/* ---------- charts ---------- */

const range = (from, to, by) => {
  const out = [];
  for (let p = from; p >= to; p -= by) out.push(p);
  return out;
};

function ThreeMinuteChart() {
  const c = L;
  return (
    <div className="flex w-[721px] flex-col">
      <Pane c={c} top={43} bottom={521}>
        <Scale c={c} ticks={range(25320, 25120, 10).map((p) => [String(p), 71 + (25320 - p) * 2.192])} />
        <Label x={3} y={59} w={633}>v:7.0.3.8, 2(YM 12-18 (3 Min),0.7,SMA,SMMA,2,21), 3 v:7.0.3.8, 5(YM 12-18 (3 Min),3), 6(35 , 37), 7, BarTimer(YM 12-18 (3 Min))</Label>
        <Level c={c} y={149} color={GREEN} thick label="AF High" lx={453} lend={494} />
        <Level c={c} y={227} color={SEA} label="AF F76.40%" lx={431} lend={494} />
        <Level c={c} y={275} color={SEA} label="AF F61.80%" lx={431} lend={494} />
        <Level c={c} y={314} color={GRAY} thick label="AF Median" lx={439} lend={494} />
        <Level c={c} y={353} color={RED} label="AF F38.20%" lx={431} lend={494} />
        <Level c={c} y={401} color={RED} label="AF F23.60%" lx={431} lend={494} />
        <Level c={c} y={478} color={RED} thick label="AF Low" lx={455} lend={494} />
        <Trend c={c} rows={lTrend} w={6} />
        <Dotted x1={340} x2={438} y={195.5} color={RED} />
        <Dotted x1={438} x2={671} y={164.5} color={GREEN} />
        <Bars c={c} rows={lBars} />
        <Stops rows={lStops} />
        <Pluses rows={lPluses.map(([x, y, k]) => [x + 0.5, y, k])} s={5.3} />
        <Marker x={438.5} y={168.5} s={10} h={10} color="#800000" />
        <Tag c={c} y={149} fill={GREEN}>25284</Tag>
        <Tag c={c} y={219} fill={RED}>25253</Tag>
        <Tag c={c} y={211} fill={RED}>25256</Tag>
        <Tag c={c} y={226} fill={SEA}>25249</Tag>
        <Tag c={c} y={237} fill="#000">25244</Tag>
        <Tag c={c} y={275} fill={SEA}>25227</Tag>
        <Tag c={c} y={314} fill={GRAY} dark>25209</Tag>
        <Tag c={c} y={353} fill={RED}>25191</Tag>
        <Tag c={c} y={401} fill={RED}>25169</Tag>
        <Tag c={c} y={478} fill={RED}>25134</Tag>
        <PlayToEnd x={641.5} />
        <FixedBox x={707.5} />
        <Label x={522} y={510} w={133}>Time remaining = 00:00:18</Label>
      </Pane>
      <Pane c={c} top={521} bottom={680}>
        <Scale c={c} ticks={[['30', 532], ['20', 561], ['10', 589], ['0', 617], ['-10', 646], ['-20', 675]]} />
        <Oscillator c={c} count={41} dots={lOsc} steps={lSteps} zero={617} upper={lUpper} lower={lLower} />
        <Label x={3} y={543}>v:7.0.3.8</Label>
        <Tag c={c} y={564} w={37} fill={GRAY} dark>18.51</Tag>
        <Tag c={c} y={617} w={14} fill={BLUE}>0</Tag>
        <Tag c={c} y={648} w={40} fill={GRAY} dark>-10.84</Tag>
        <Tag c={c} y={667} w={40} fill={ROSE} dark>-17.27</Tag>
      </Pane>
      <Pane c={c} top={680} bottom={839}>
        <Scale c={c} ticks={[['250', 689], ['200', 716], ['150', 744], ['100', 771], ['50', 798], ['0', 826]]} />
        <Volume c={c} tops={lVolume} isRed={lVolRed} line={lBrown} dotY={809} />
        <Label x={-5.5} y={702} w={229}>AT Trigger: [S(150) - DZ(30) - EP(15) - TP(15)]</Label>
        <Tag c={c} y={767} w={43} fill={RED}>107.84</Tag>
        <Tag c={c} y={796} w={37} fill={BROWN}>53.78</Tag>
        <Tag c={c} y={809} w={21} fill={BLUE}>30</Tag>
      </Pane>
      <Pane c={c} top={839} bottom={1003}>
        <Scale c={c} ticks={[['25280', 857], ['25260', 884], ['25240', 911], ['25220', 938], ['25200', 965]]} />
        <Candles c={c} rows={lCandles} up="#008000" dn="#b40000" />
        <Label x={-6} y={861} w={100}>5(YM 12-18 (3 Min))</Label>
        <Label x={-6} y={973} w={124}>© 2018 NinjaTrader, LLC</Label>
        <TimeAxis c={c} times={['21:00', '21:15', '21:30', '21:45', '22:00', '22:15', '22:30', '22:45', '23:00'].map((t, k) => [t, 46 + 70 * k])} />
      </Pane>
      <ScrollBar thumb={2} rightGap="mr-[5px]" />
    </div>
  );
}

function OneMinuteChart() {
  const c = R;
  return (
    <div className="relative flex w-[1018px] flex-col">
      <Pane c={c} top={43} bottom={521}>
        <Scale c={c} ticks={range(25295, 25210, 5).map((p) => [String(p), 71.5 + (25295 - p) * 4.955])} />
        <Label x={897} y={59} w={641}>1 v:7.0.3.8, 2(YM 12-18 (1 Min),0.7,SMA,SMMA,2,21), 3 v:7.0.3.8, 5(YM 12-18 (1 Min),3), 6(35 , 37), 7, BarTimer(YM 12-18 (1 Min))</Label>
        <Level c={c} y={126} color={GREEN} thick label="AF High" lx={1637} lend={1678} />
        <Level c={c} y={203} color={SEA} label="AF F76.40%" lx={1615} soft />
        <Level c={c} y={250} color={SEA} label="AF F61.80%" lx={1615} soft />
        <Level c={c} y={289} color={GRAY} thick label="AF Median" lx={1623} lend={1678} />
        <Level c={c} y={327} color={RED} label="AF F38.20%" lx={1615} soft />
        <Level c={c} y={375} color={RED} label="AF F23.60%" lx={1615} soft />
        <Level c={c} y={452} color={RED} thick label="AF Low" lx={1639} lend={1678} />
        <Trend c={c} rows={rTrend} w={8.6} />
        {rFall.map(([i, bt, bb, wb]) => (
          <g key={i}>
            <rect x={c.x(i) - 4.3} y={bt} width="8.6" height={bb - bt} fill="#800080" />
            <path d={`M${c.x(i)} ${bb - 1}V${wb}`} stroke="#000" strokeWidth="2.8" />
          </g>
        ))}
        <Dotted x1={1073} x2={1149} y={254.5} color={RED} />
        <Dotted x1={1238} x2={1348} y={180.5} color={RED} />
        <Dotted x1={1095} x2={1183} y={220.5} color={GREEN} />
        <Dotted x1={1447} x2={1861} y={284.5} color={GREEN} />
        <Bars c={c} rows={rBars} tick={3} />
        <Stops rows={rStops} />
        <Pluses rows={rPluses} s={4.4} />
        <Marker x={1150.5} y={205.5} s={10} h={10} color="#800000" />
        <Marker x={1348.5} y={127} s={10} h={10} color="#800000" />
        <Marker x={1183.5} y={269.5} s={10} h={-10} color="#006400" />
        <Marker x={908.5} y={300} s={5} h={5} color={RED} />
        <Marker x={1348.5} y={151} s={5} h={5} color={RED} />
        <Marker x={1678.5} y={270} s={5} h={5} color={RED} />
        <Marker x={1051.5} y={299} s={5} h={-5} color={BLUE} />
        <Marker x={1557.5} y={373} s={5} h={-5} color={BLUE} />
        <Tag c={c} y={126} fill={GREEN}>25284</Tag>
        <Tag c={c} y={203} fill={SEA}>25268</Tag>
        <Tag c={c} y={250} fill={SEA}>25259</Tag>
        <Tag c={c} y={289} fill={GRAY} dark>25251</Tag>
        <Tag c={c} y={327} fill={RED}>25243</Tag>
        <Tag c={c} y={323.5} fill="#000">25244</Tag>
        <Tag c={c} y={362} fill={BLUE}>25236</Tag>
        <Tag c={c} y={375} fill={RED}>25234</Tag>
        <Tag c={c} y={452} fill={RED}>25218</Tag>
        <PlayToEnd x={1832.5} />
        <FixedBox x={1874.5} />
        <g>
          <rect x="1889.5" y="44.500" width="21" height="21" fill="#f0f0f0" stroke="#a8a8a8" />
          <path d="M1895 52H1905L1900 57Z" fill="#000" />
        </g>
        <Label x={1713} y={510} w={133}>Time remaining = 00:00:17</Label>
      </Pane>
      <Pane c={c} top={521} bottom={680}>
        <Scale c={c} ticks={[['10', 548.7], ['0', 586], ['-10', 625], ['-20', 663]]} />
        <Oscillator c={c} count={76} dots={rOsc} steps={rSteps} zero={586} upper={rUpper} lower={rLower} isRed={(i) => i >= 9 && i <= 14} />
        <Label x={896} y={543}>4 v:7.0.3.8</Label>
        <Tag c={c} y={576} w={30} fill={SKY} dark>3.23</Tag>
        <Tag c={c} y={566} w={30} fill={GRAY} dark>5.26</Tag>
        <Tag c={c} y={586} w={14} fill={BLUE}>0</Tag>
        <Tag c={c} y={635} w={40} fill={GRAY} dark>-12.72</Tag>
      </Pane>
      <Pane c={c} top={680} bottom={839}>
        <Scale c={c} ticks={[['150', 709], ['100', 748], ['50', 787], ['0', 826]]} />
        <Volume c={c} tops={rVolume} isRed={rVolRed} line={rBrown} dotY={802} />
        <Label x={896} y={702} w={229}>AT Trigger: [S(150) - DZ(30) - EP(15) - TP(15)]</Label>
        <Tag c={c} y={802} w={21} fill={BLUE}>30</Tag>
        <Tag c={c} y={807} w={37} fill={GREEN}>23.59</Tag>
      </Pane>
      <Pane c={c} top={839} bottom={1003}>
        <Scale c={c} ticks={[['25280', 859], ['25260', 901], ['25240', 942]]} />
        <Candles c={c} rows={rCandles} up="#b4ffb4" dn="#ffb6b6" />
        <Label x={896} y={861} w={100}>6(YM 12-18 (1 Min))</Label>
        <Label x={896} y={973} w={124}>© 2018 NinjaTrader, LLC</Label>
        <TimeAxis c={c} times={[['21:40', 974], ['21:50', 1062], ['22:00', 1172], ['22:10', 1282], ['22:20', 1392], ['22:30', 1502], ['22:40', 1612], ['22:50', 1722], ['23:00', 1832]]} />
      </Pane>
      <ScrollBar thumb={9} rightGap="mr-[5px]" />
      <div className="pointer-events-none absolute inset-y-0 left-0 w-3 bg-linear-to-r from-black/12 to-transparent" />
    </div>
  );
}

/* ---------- order entry ---------- */

function OrderButton({ tone, children }) {
  return (
    <button className={`flex h-[38px] w-[70px] items-center justify-center border border-[#adadad] px-2 text-center leading-3 shadow-[inset_0_0_0_2px_#e1e1e1] ${tone}`}>
      {children}
    </button>
  );
}

function OrderPanel() {
  const buy = 'bg-[#f0fff0]';
  const sell = 'bg-[#fff0f5]';
  const flat = 'bg-[#faebd7]';
  return (
    <div className={`flex w-[168px] flex-col border-t border-l-2 border-[#6f6f6f] bg-[#f0f0f0] pl-[8px] text-[11px] tracking-[0.1px] text-black ${FONT}`}>
      <div className="mt-[2px] mr-px flex h-[21px] w-[20px] items-center justify-center self-end border border-r-0 border-[#a8a8a8] bg-[#f4f4f4]">
        <svg width="10" height="5" viewBox="0 0 10 5"><path d="M0 5H10L5 0Z" fill="#000" /></svg>
      </div>
      <div className="mt-[11px] ml-px grid grid-cols-[70px_70px] gap-[10px]">
        <OrderButton tone={buy}>BUY MARKET</OrderButton>
        <OrderButton tone={sell}>SELL MARKET</OrderButton>
        <OrderButton tone={buy}><span className="whitespace-nowrap">BUY ASK</span></OrderButton>
        <OrderButton tone={sell}><span className="whitespace-nowrap">SELL ASK</span></OrderButton>
        <OrderButton tone={buy}><span className="whitespace-nowrap">BUY BID</span></OrderButton>
        <OrderButton tone={sell}><span className="whitespace-nowrap">SELL BID</span></OrderButton>
        <OrderButton tone={flat}>REV</OrderButton>
        <OrderButton tone={flat}>CLOSE</OrderButton>
      </div>
      <div className="mt-[12px] flex h-[24px] w-[152px] border border-[#646464] bg-[#faebd7]">
        <div className="flex w-[76px] items-center justify-center border-r border-[#646464]">FLAT</div>
        <div className="flex flex-1 items-center justify-center">ENTRY</div>
      </div>
      <div className="flex h-[24px] w-[152px] items-center justify-center border border-[#646464] bg-black font-['Noto_Sans','Open_Sans',sans-serif] font-bold text-white">PnL</div>
      <div className="mt-[11px] flex h-4 items-center pl-[24px]">
        <span className="w-[87px]">Account</span>
        <span>Qty</span>
      </div>
      <div className="mt-[3px] flex">
        <div className="relative flex h-[21px] w-[90px] items-center justify-end border border-[#adadad] bg-[#e1e1e1] pr-[2px]">
          <span className="mr-[7px]">an</span>
          <ChevronDown size={9} strokeWidth={2.5} color="#555" />
          <svg className="absolute top-0 left-0" width="80" height="20" viewBox="0 0 80 20" fill="none" stroke="#000" strokeLinecap="round">
            <path d="M5 10C20 7 34 8 44 7C54 5 64 5 72 7" strokeWidth="8" />
            <path d="M45 13C48 15 51 16 53 14" strokeWidth="8" />
          </svg>
        </div>
        <div className="ml-[6px] flex h-[20px] w-[56px] items-center justify-between border border-[#adadad] bg-white pr-px pl-[3px]">
          <span className="pb-[2px] text-[12px]">1</span>
          <div className="flex flex-col gap-px">
            <div className="flex h-[8px] w-[14px] items-center justify-center border border-[#c0c0c0] bg-[#f0f0f0]"><svg width="5" height="3" viewBox="0 0 5 3"><path d="M0 3H5L2.500 0Z" fill="#000" /></svg></div>
            <div className="flex h-[8px] w-[14px] items-center justify-center border border-[#c0c0c0] bg-[#f0f0f0]"><Caret /></div>
          </div>
        </div>
      </div>
      <div className="mt-[12px] flex w-[152px] items-center justify-between pl-[14px]">
        <span>ATM Strategy</span>
        <div className="flex h-[18px] w-[28px] items-center justify-center border border-[#adadad] bg-[#e1e1e1]">...</div>
      </div>
      <div className="mt-[3px] flex h-[21px] w-[152px] items-center justify-between border border-[#adadad] bg-[#e1e1e1] pr-1 pl-[3px]">
        <span className="tracking-[-0.3px]">&lt;Custom&gt;</span>
        <ChevronDown size={11} color="#444" />
      </div>
      <div className="mt-[11px] flex h-4 items-center pl-[21px]"><span className="w-[80px]">A: 25244</span><span>3</span></div>
      <div className="mt-[6px] flex h-4 items-center pl-[21px]"><span className="w-[80px]">B: 25243</span><span>1</span></div>
    </div>
  );
}

function BackWindow() {
  return (
    <div className={`flex w-[18px] shrink-0 flex-col overflow-hidden text-[11px] whitespace-nowrap text-white ${UI_FONT}`}>
      <div className="h-[10px] bg-black" />
      <div className="h-[67px] border-l border-[#999] bg-[#f7f7f7] text-black">
        <svg width="17" height="43" viewBox="0 0 17 43">
          <path d="M1 7L13 4V16L2 18Z" fill="#e8f4c4" stroke="#7ba51c" strokeWidth="1.500" />
          <path d="M3 12L7 8V10.500H11V13.500H7V15.500Z" fill="#7ab51d" />
          <path d="M6 28L17 25V38L6 40Z" fill="#e8f4c4" stroke="#7ba51c" strokeWidth="1.500" />
          <path d="M8 33L12 29V31.500H17V34.500H12V37Z" fill="#7ab51d" />
        </svg>
        <div className="h-[22px] border-y border-[#b0b0b0] pl-[3px] leading-5">Lau</div>
      </div>
      <div className="flex-1 bg-linear-to-b from-[#5c5c5c] via-[#3a3a3a] via-50% to-[#1c1c1c]">
        <div className="mt-[89px] ml-[4px] h-4 leading-4">Re</div>
        <div className="mt-[69px] ml-[9px] h-4 leading-4">Qu</div>
        <div className="mt-[69px] ml-[13px] h-4 leading-4">D</div>
        <div className="mt-[69px] ml-[8px] h-4 leading-4">0r</div>
      </div>
    </div>
  );
}

export default function App() {
  return (
    <div className="flex h-[1025px] w-[1929px] overflow-hidden bg-white">
      <div className="flex w-[889px] shrink-0 flex-col">
        <TitleBar title="YM 12-18 (3 Min)  05/11/2018" pad="pl-0" color="text-[#222]" right="mr-[16px]" />
        <div className="h-[25px] shrink-0 bg-linear-to-b from-white to-[#f0f0f0]">
          <ToolBar period="3 Min" zoomOutOff />
        </div>
        <div className="flex flex-1">
          <ThreeMinuteChart />
          <OrderPanel />
        </div>
      </div>
      <div className="w-[4px] shrink-0 border-r border-l border-l-[#d0d0d0] border-r-[#222] bg-[#6b7070]" />
      <div className="flex w-[1018px] shrink-0 flex-col">
        <TitleBar title="YM 12-18 (1 Min)  05/11/2018" pad="pl-[9px]" color="text-[#999]" right="mr-[15px]" />
        <div className="flex h-[25px] shrink-0 bg-linear-to-b from-white to-[#f0f0f0]">
          <div className="mt-[4px] ml-[3px] h-[14px] w-[6px] border-l-2 border-dotted border-[#b0b0b0]" />
          <ToolBar period="1 Min" />
        </div>
        <OneMinuteChart />
      </div>
      <BackWindow />
    </div>
  );
}
